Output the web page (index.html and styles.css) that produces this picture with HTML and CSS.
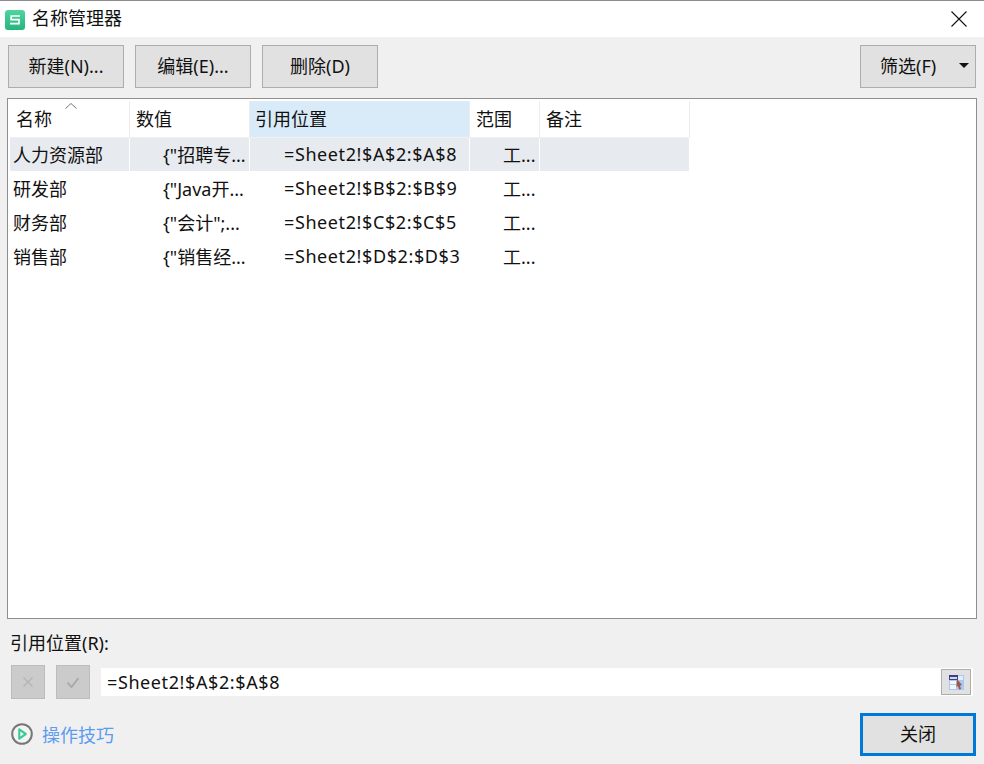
FILE: index.html
```html
<!DOCTYPE html>
<html lang="zh-CN">
<head>
<meta charset="utf-8">
<title>名称管理器</title>
<link rel="stylesheet" href="styles.css">
</head>
<body>
<div class="dialog">
  <header class="titlebar">
    <svg class="app-icon" width="20" height="20" viewBox="0 0 20 20"><defs><linearGradient id="g" x1="0" y1="0" x2="0" y2="1"><stop offset="0" stop-color="#4fd4a0"/><stop offset="1" stop-color="#24b57f"/></linearGradient></defs><rect x="0" y="0" width="20" height="20" rx="3" fill="url(#g)"/><path d="M15 6H6.200v3.700h7.800v3.900H5" fill="none" stroke="#fff" stroke-width="1.700"/></svg>
    <span class="title">名称管理器</span>
    <svg class="close-x" width="16" height="16" viewBox="0 0 16 16"><path d="M.5.5l15 15M15.500.5l-15 15" stroke="#111" stroke-width="1.100" fill="none"/></svg>
  </header>
  <div class="toolbar">
    <button class="btn">新建(N)...</button>
    <button class="btn">编辑(E)...</button>
    <button class="btn">删除(D)</button>
    <button class="btn filter"><span>筛选(F)</span><i class="caret"></i></button>
  </div>
  <div class="list">
    <div class="row head">
      <div class="cell name sorted">名称<svg class="sort" width="12" height="6" viewBox="0 0 12 6"><path d="M.5 5.500L6 .5l5.500 5" fill="none" stroke="#777"/></svg></div>
      <div class="cell val">数值</div>
      <div class="cell ref active">引用位置</div>
      <div class="cell scope">范围</div>
      <div class="cell note">备注</div>
    </div>
    <div class="row sel">
      <div class="cell name">人力资源部</div><div class="cell val">{"招聘专...</div><div class="cell ref formula">=Sheet2!$A$2:$A$8</div><div class="cell scope">工...</div><div class="cell note"></div>
    </div>
    <div class="row">
      <div class="cell name">研发部</div><div class="cell val">{"Java开...</div><div class="cell ref formula">=Sheet2!$B$2:$B$9</div><div class="cell scope">工...</div><div class="cell note"></div>
    </div>
    <div class="row">
      <div class="cell name">财务部</div><div class="cell val">{"会计";...</div><div class="cell ref formula">=Sheet2!$C$2:$C$5</div><div class="cell scope">工...</div><div class="cell note"></div>
    </div>
    <div class="row">
      <div class="cell name">销售部</div><div class="cell val">{"销售经...</div><div class="cell ref formula">=Sheet2!$D$2:$D$3</div><div class="cell scope">工...</div><div class="cell note"></div>
    </div>
  </div>
  <div class="ref-label">引用位置(R):</div>
  <div class="ref-bar">
    <button class="mini"><svg width="14" height="14" viewBox="0 0 14 14"><path d="M2.500 2.500l9 9M11.500 2.500l-9 9" stroke="#b4b4b4" stroke-width="1.200" fill="none"/></svg></button>
    <button class="mini"><svg width="14" height="14" viewBox="0 0 14 14"><path d="M1.500 7.500l4 4.500 7-9" stroke="#a8a8a8" stroke-width="1.800" fill="none"/></svg></button>
    <div class="ref-input">
      <span class="ref-text formula">=Sheet2!$A$2:$A$8</span>
      <button class="picker"><svg width="15" height="15" viewBox="0 0 15 15"><rect width="15" height="15" fill="#a9c9f5"/><rect x="1" y="6" width="6" height="3" fill="#f2f6fd"/><rect x="1" y="10" width="6" height="4" fill="#f2f6fd"/><rect x="9" y="1" width="5" height="4" fill="#e3eefc"/><rect x="0" y="0" width="9" height="5" fill="#3b3f8f"/><rect x="1" y="2" width="7" height="2" fill="#d9d9d9"/><path d="M8 4l5 6-2 .5 1 3.500-2 .5-1-3.500-1.500 1z" fill="#a2573f"/></svg></button>
    </div>
  </div>
  <footer class="footer">
    <a class="tips">
      <svg width="22" height="22" viewBox="0 0 22 22"><circle cx="11" cy="11" r="9.800" fill="#f4f4f4" stroke="#777" stroke-width="2"/><path d="M8.300 6.300l6.400 4.700-6.400 4.700z" fill="#fff" stroke="#3ccb94" stroke-width="2.200" stroke-linejoin="round"/></svg>
      <span>操作技巧</span>
    </a>
    <button class="btn primary">关闭</button>
  </footer>
</div>
</body>
</html>
```
FILE: styles.css
```css
* { box-sizing: border-box; }
html, body { margin: 0; padding: 0; }
body {
  width: 984px;
  height: 764px;
  overflow: hidden;
  background: #f0f0f0;
  color: #111;
  font-family: "Noto Sans", "Noto Sans CJK SC", sans-serif;
  font-size: 18px;
}
button { font: inherit; color: inherit; margin: 0; padding: 0; }
.dialog { display: flex; flex-direction: column; height: 764px; }

.titlebar {
  height: 37px;
  flex: none;
  display: flex;
  align-items: center;
  background: #fff;
  border-top: 1px solid #8c8c8c;
  padding: 0 17px 0 5px;
}
.app-icon { flex: none; margin-top: 1px; }
.title { margin-left: 7px; line-height: 36px; margin-top: -2px; }
.close-x { margin-left: auto; }

.toolbar { display: flex; height: 43px; margin: 8px 8px 0; gap: 11px; flex: none; }
.btn {
  width: 116px;
  height: 43px;
  background: #e1e1e1;
  border: 1px solid #adadad;
  display: flex;
  align-items: center;
  justify-content: center;
  padding-bottom: 3px;
}
.filter { margin-left: auto; justify-content: flex-start; padding-left: 19px; }
.caret {
  margin-left: 23px;
  width: 0; height: 0;
  border-left: 5px solid transparent;
  border-right: 5px solid transparent;
  border-top: 5px solid #111;
}

.list {
  flex: none;
  height: 521px;
  margin: 10px 7px 0;
  background: #fff;
  border: 1px solid #8f8f8f;
  padding: 2px;
}
.row { display: flex; height: 34px; }
.row.head { height: 37px; }
.row.sel { height: 33px; margin-bottom: 1px; }
.cell {
  flex: none;
  display: flex;
  align-items: center;
  white-space: nowrap;
  overflow: hidden;
  border-right: 1px solid transparent;
  padding-bottom: 2px;
}
.name { width: 120px; padding-left: 3px; }
.val { width: 120px; padding-left: 33px; }
.ref { width: 220px; padding-left: 34px; }
.scope { width: 70px; padding-left: 33px; }
.note { width: 149px; padding-left: 6px; }
.formula { letter-spacing: 0.6px; }
.head .cell { border-right: 1px solid #ececec; border-bottom: 1px solid #f0f0f0; padding-top: 0; }
.head .name { padding-left: 6px; position: relative; }
.head .val { padding-left: 6px; }
.head .ref { padding-left: 5px; }
.head .scope { padding-left: 6px; }
.head .note { padding-left: 6px; width: 150px; }
.head .active { background: #d9ebf9; }
.sort { position: absolute; left: 55px; top: 2px; }
.sel .cell { background: #e7eaef; border-right: 1px solid #fff; }
.sel .note { border-right: 0; }

.ref-label { flex: none; margin: 12px 0 0 10px; line-height: 24px; height: 24px; }
.ref-bar { flex: none; display: flex; align-items: center; margin: 10px 11px 0 11px; height: 34px; gap: 11px; }
.mini {
  flex: none;
  width: 34px;
  height: 34px;
  background: #cbcbcb;
  border: 1px solid #bcbcbc;
  display: flex;
  align-items: center;
  justify-content: center;
}
.ref-input {
  flex: 1;
  height: 28px;
  background: #fff;
  display: flex;
  align-items: center;
  padding: 0 2px 0 6px;
}
.ref-text { line-height: 28px; }
.picker {
  margin-left: auto;
  width: 30px;
  height: 26px;
  background: #e1e1e1;
  border: 1px solid #adadad;
  display: flex;
  align-items: center;
  justify-content: center;
  padding: 0;
}

.footer {
  flex: none;
  display: flex;
  align-items: center;
  justify-content: space-between;
  margin: 14px 8px 0 11px;
  height: 43px;
}
.tips { display: flex; align-items: center; gap: 9px; color: #5b9bf0; margin-top: -1px; }
.primary { border: 3px solid #0078d7; }
```
